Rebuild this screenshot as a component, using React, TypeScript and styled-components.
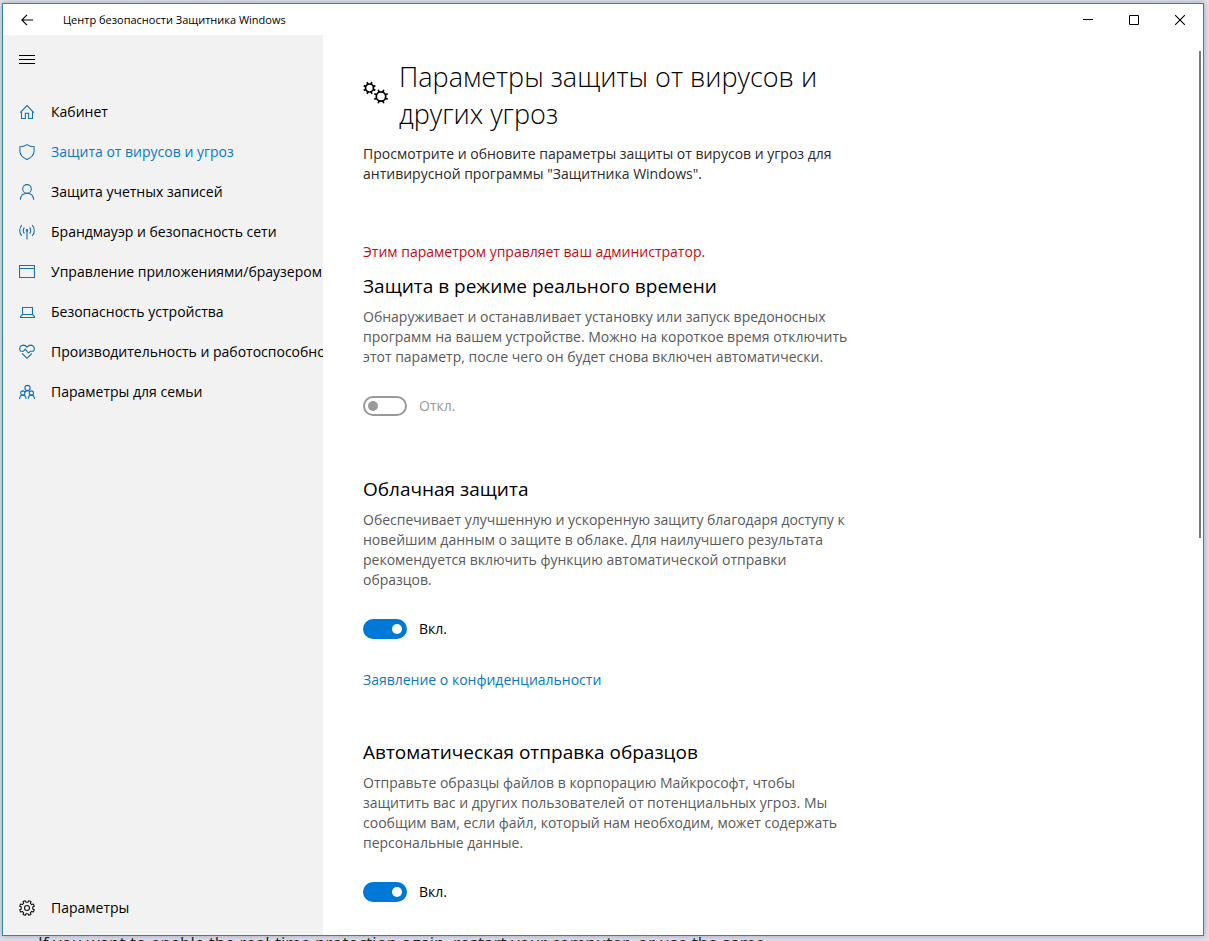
import React, { useState } from "react";
import type { ReactNode } from "react";
import styled, { createGlobalStyle } from "styled-components";

const blue = "#0b78c4";

const GlobalStyle = createGlobalStyle`
  * { box-sizing: border-box; }
  body {
    margin: 0;
    background: #e3e0e6;
    font-family: "Open Sans", "Noto Sans", sans-serif;
    font-size: 14px;
    line-height: 20px;
    color: #000;
  }
  h1, h2, p { margin: 0; font-weight: 400; }
  button { border: 0; padding: 0; background: none; font: inherit; color: inherit; }
`;

const Desktop = styled.div`
  display: flex;
  flex-direction: column;
  height: 100vh;
  padding: 3px 5px 0 2px;
  overflow: hidden;
`;

const Window = styled.div`
  flex: 1;
  min-height: 0;
  display: flex;
  flex-direction: column;
  background: #fff;
  border: 1px solid #2b87a8;
  box-shadow: 0 0 6px rgba(60, 90, 150, 0.45);
`;

const PageBehind = styled.p`
  height: 5px;
  padding-left: 36px;
  overflow: hidden;
  white-space: nowrap;
  font-size: 17px;
  line-height: 14px;
  color: #222;
`;

const TitleBar = styled.header`
  display: flex;
  align-items: center;
  height: 31px;
  flex: none;
`;

const BackButton = styled.button`
  display: grid;
  place-items: center;
  width: 48px;
  height: 30px;
`;

const WindowTitle = styled.div`
  flex: 1;
  padding-left: 12px;
  font-size: 11px;
`;

const CaptionButton = styled.button`
  display: grid;
  place-items: center;
  width: 46px;
  height: 30px;
`;

const Body = styled.div`
  flex: 1;
  min-height: 0;
  display: flex;
`;

const Sidebar = styled.nav`
  display: flex;
  flex-direction: column;
  flex: none;
  width: 320px;
  padding: 1px 0 7px;
  background: #f2f2f2;
  overflow: hidden;
`;

const MenuButton = styled.button`
  display: grid;
  place-items: center;
  width: 48px;
  height: 48px;
  margin-bottom: 8px;
`;

const NavLink = styled.a<{ $active?: boolean }>`
  display: flex;
  align-items: center;
  height: 40px;
  white-space: nowrap;
  text-decoration: none;
  color: ${(p) => (p.$active ? blue : "#000")};
`;

const NavIcon = styled.span<{ $dark?: boolean }>`
  display: grid;
  place-items: center;
  flex: none;
  width: 48px;
  color: ${(p) => (p.$dark ? "#111" : "#1770b8")};
`;

const Spacer = styled.div`
  flex: 1;
`;

const Main = styled.main`
  flex: 1;
  min-width: 0;
  padding: 23px 24px 0 40px;
  overflow: hidden;
`;

const Column = styled.div`
  max-width: 500px;
`;

const PageHeading = styled.div`
  display: flex;
  align-items: flex-start;
  gap: 10px;
  margin-bottom: 12px;
`;

const HeadingIcon = styled.span`
  display: flex;
  padding-top: 23px;
`;

const Title = styled.h1`
  font-size: 27px;
  line-height: 37px;
  font-weight: 300;
  white-space: nowrap;
`;

const Lead = styled.p`
  color: #2b2b2b;
  white-space: nowrap;
`;

const Warning = styled.p`
  margin-top: 58px;
  color: #c40d12;
`;

const Section = styled.section<{ $top: number }>`
  padding-top: ${(p) => p.$top}px;
`;

const SectionTitle = styled.h2`
  margin-bottom: 7px;
  font-size: 19px;
  line-height: 28px;
`;

const Description = styled.p`
  margin-bottom: 29px;
  color: #5a5a5a;
  white-space: nowrap;
`;

const SwitchRow = styled.label<{ $disabled?: boolean }>`
  display: flex;
  align-items: center;
  gap: 12px;
  height: 20px;
  color: ${(p) => (p.$disabled ? "#999" : "#000")};
`;

const Switch = styled.input`
  appearance: none;
  display: flex;
  align-items: center;
  width: 44px;
  height: 20px;
  margin: 0;
  padding: 0 3px;
  border: 2px solid #333;
  border-radius: 10px;
  &::before {
    content: "";
    width: 10px;
    height: 10px;
    border-radius: 50%;
    background: #333;
  }
  &:checked {
    justify-content: flex-end;
    border-color: #0078d7;
    background: #0078d7;
  }
  &:checked::before { background: #fff; }
  &:disabled { border-color: #999; }
  &:disabled::before { background: #999; }
`;

const TextLink = styled.a`
  display: block;
  width: max-content;
  margin-top: 31px;
  color: ${blue};
  text-decoration: none;
`;

const ScrollRail = styled.div`
  flex: none;
  width: 2px;
  margin: 16px 2px 15px 0;
`;

const ScrollThumb = styled.div`
  height: 56%;
  background: #7a7a7a;
`;

function Icon({ size = 16, children }: { size?: number; children: ReactNode }) {
  return (
    <svg width={size} height={size} viewBox={`0 0 ${size} ${size}`} fill="none" stroke="currentColor" strokeWidth="1.1" aria-hidden="true">
      {children}
    </svg>
  );
}

function gearPath(cx: number, cy: number, teeth: number, outer: number, inner: number) {
  const step = (Math.PI * 2) / teeth;
  const points: string[] = [];
  for (let i = 0; i < teeth; i++) {
    const a = i * step + step / 2;
    const corners: [number, number][] = [[-0.3, inner], [-0.2, outer], [0.2, outer], [0.3, inner]];
    corners.forEach(([t, r]) => {
      points.push(`${(cx + Math.cos(a + t * step) * r).toFixed(2)} ${(cy + Math.sin(a + t * step) * r).toFixed(2)}`);
    });
  }
  return `M${points.join("L")}Z`;
}

function spokes(cx: number, cy: number, teeth: number, from: number, to: number) {
  return Array.from({ length: teeth }, (_, i) => {
    const a = ((i + 0.5) * Math.PI * 2) / teeth;
    const c = Math.cos(a);
    const s = Math.sin(a);
    return `M${(cx + c * from).toFixed(2)} ${(cy + s * from).toFixed(2)}L${(cx + c * to).toFixed(2)} ${(cy + s * to).toFixed(2)}`;
  }).join("");
}

const navItems: { label: string; icon: ReactNode }[] = [
  { label: "Кабинет", icon: <path d="M1.2 8.6 8 1.6l6.8 7M2.5 7.4v7.1h3.9V9.3h3.2v5.2h3.9V7.4" /> },
  {
    label: "Защита от вирусов и угроз",
    icon: <path d="M8 .6C6 2 3.5 2.7.9 2.8V7c0 4 2.9 6.7 7.1 8.5C12.2 13.7 15.1 11 15.1 7V2.8C12.500 2.700 10 2 8 .6Z" />,
  },
  {
    label: "Защита учетных записей",
    icon: (
      <>
        <circle cx="8" cy="4.9" r="4.3" />
        <path d="M1.3 15.8c.3-4 3-6.600 6.700-6.600s6.400 2.600 6.700 6.600" />
      </>
    ),
  },
  {
    label: "Брандмауэр и безопасность сети",
    icon: (
      <>
        <path d="M8 6.500v9M5.400 3.500c-1.500 1.500-1.500 4.500 0 6M10.600 3.500c1.500 1.500 1.500 4.500 0 6M2.800 1.200c-2.800 3-2.800 7.600 0 10.600M13.200 1.200c2.800 3 2.800 7.600 0 10.600" />
        <circle cx="8" cy="6.3" r=".8" />
      </>
    ),
  },
  { label: "Управление приложениями/браузером", icon: <path d="M.5 1.500h15v12H.5zM.5 4.500h15" /> },
  { label: "Безопасность устройства", icon: <path d="M3.500 3.500h10v7h-10zM3.500 10.500l-2 2v1h14v-1l-2-2" /> },
  {
    label: "Производительность и работоспособность устройства",
    icon: (
      <path d="M1.6 7.200C-.2 4.800.8 1.200 4.200 1.100 6 1.100 7.200 2 8 3.200 8.800 2 10 1.100 11.800 1.100c3.400.1 4.400 3.700 2.600 6.100M1.300 7.200h3.200l1.700-2 3.200 3.800 2-1.800h3.300M3.200 9.500 8 14.300l4.800-4.800" />
    ),
  },
  {
    label: "Параметры для семьи",
    icon: (
      <>
        <circle cx="8.5" cy="4" r="2.6" />
        <circle cx="3.8" cy="9" r="2.1" />
        <circle cx="12.400" cy="9" r="2.1" />
        <path d="M.6 15c.1-2.400 1.300-3.900 3.200-3.900S6.900 12.600 7 15M9.300 15c.1-2.400 1.200-3.900 3.100-3.900s3 1.500 3.100 3.900M5.700 8.600c.5-1.200 1.500-2 2.800-2s2 .5 2.500 1.300" />
      </>
    ),
  },
];

function lines(text: string[]) {
  return text.map((line, i) => (
    <React.Fragment key={i}>
      {i > 0 && <br />}
      {line}
    </React.Fragment>
  ));
}

function Toggle({ initial, disabled }: { initial: boolean; disabled?: boolean }) {
  const [on, setOn] = useState(initial);
  return (
    <SwitchRow $disabled={disabled}>
      <Switch type="checkbox" role="switch" checked={on} disabled={disabled} onChange={(e) => setOn(e.target.checked)} />
      {on ? "Вкл." : "Откл."}
    </SwitchRow>
  );
}

export default function App() {
  return (
    <>
      <GlobalStyle />
      <Desktop>
        <Window>
          <TitleBar>
            <BackButton aria-label="Назад">
              <svg width="12" height="12" viewBox="0 0 12 12" fill="none" stroke="#000" strokeWidth="1.2">
                <path d="M12 6H.8M6 .8.8 6 6 11.2" />
              </svg>
            </BackButton>
            <WindowTitle>Центр безопасности Защитника Windows</WindowTitle>
            <CaptionButton aria-label="Свернуть">
              <svg width="10" height="10" viewBox="0 0 10 10" stroke="#000"><path d="M0 4.500h10" /></svg>
            </CaptionButton>
            <CaptionButton aria-label="Развернуть">
              <svg width="10" height="10" viewBox="0 0 10 10" fill="none" stroke="#000"><path d="M.5.5h9v9h-9z" /></svg>
            </CaptionButton>
            <CaptionButton aria-label="Закрыть">
              <svg width="10" height="10" viewBox="0 0 10 10" stroke="#000" strokeWidth="1.1"><path d="m0 0 10 10M10 0 0 10" /></svg>
            </CaptionButton>
          </TitleBar>
          <Body>
            <Sidebar>
              <MenuButton aria-label="Меню">
                <svg width="16" height="10" viewBox="0 0 16 10" stroke="#000"><path d="M0 .5h16M0 4.500h16M0 8.500h16" /></svg>
              </MenuButton>
              {navItems.map((item, i) => (
                <NavLink key={item.label} href="#" $active={i === 1}>
                  <NavIcon><Icon>{item.icon}</Icon></NavIcon>
                  {item.label}
                </NavLink>
              ))}
              <Spacer />
              <NavLink href="#">
                <NavIcon $dark>
                  <Icon>
                    <path d={gearPath(8, 8, 8, 7.5, 5.8)} strokeLinejoin="round" />
                    <circle cx="8" cy="8" r="2.5" />
                  </Icon>
                </NavIcon>
                Параметры
              </NavLink>
            </Sidebar>
            <Main>
              <Column>
                <PageHeading>
                  <HeadingIcon>
                    <svg width="26" height="24" viewBox="0 0 26 24" fill="none" stroke="#000" strokeWidth="1.7" aria-hidden="true">
                      <circle cx="6.5" cy="7" r="4" />
                      <path d={spokes(6.5, 7, 8, 4, 6.3)} />
                      <circle cx="18" cy="15.5" r="4.7" />
                      <path d={spokes(18, 15.5, 8, 4.7, 7.3)} />
                    </svg>
                  </HeadingIcon>
                  <Title>{lines(["Параметры защиты от вирусов и", "других угроз"])}</Title>
                </PageHeading>
                <Lead>
                  {lines([
                    "Просмотрите и обновите параметры защиты от вирусов и угроз для",
                    "антивирусной программы \"Защитника Windows\".",
                  ])}
                </Lead>
                <Warning>Этим параметром управляет ваш администратор.</Warning>
                <Section $top={10}>
                  <SectionTitle>Защита в режиме реального времени</SectionTitle>
                  <Description>
                    {lines([
                      "Обнаруживает и останавливает установку или запуск вредоносных",
                      "программ на вашем устройстве. Можно на короткое время отключить",
                      "этот параметр, после чего он будет снова включен автоматически.",
                    ])}
                  </Description>
                  <Toggle initial={false} disabled />
                </Section>
                <Section $top={59}>
                  <SectionTitle>Облачная защита</SectionTitle>
                  <Description>
                    {lines([
                      "Обеспечивает улучшенную и ускоренную защиту благодаря доступу к",
                      "новейшим данным о защите в облаке. Для наилучшего результата",
                      "рекомендуется включить функцию автоматической отправки",
                      "образцов.",
                    ])}
                  </Description>
                  <Toggle initial />
                  <TextLink href="#">Заявление о конфиденциальности</TextLink>
                </Section>
                <Section $top={48}>
                  <SectionTitle>Автоматическая отправка образцов</SectionTitle>
                  <Description>
                    {lines([
                      "Отправьте образцы файлов в корпорацию Майкрософт, чтобы",
                      "защитить вас и других пользователей от потенциальных угроз. Мы",
                      "сообщим вам, если файл, который нам необходим, может содержать",
                      "персональные данные.",
                    ])}
                  </Description>
                  <Toggle initial />
                </Section>
              </Column>
            </Main>
            <ScrollRail><ScrollThumb /></ScrollRail>
          </Body>
        </Window>
        <PageBehind>
          If you want to enable the real-time protection again, restart your computer, or use the same
        </PageBehind>
      </Desktop>
    </>
  );
}
